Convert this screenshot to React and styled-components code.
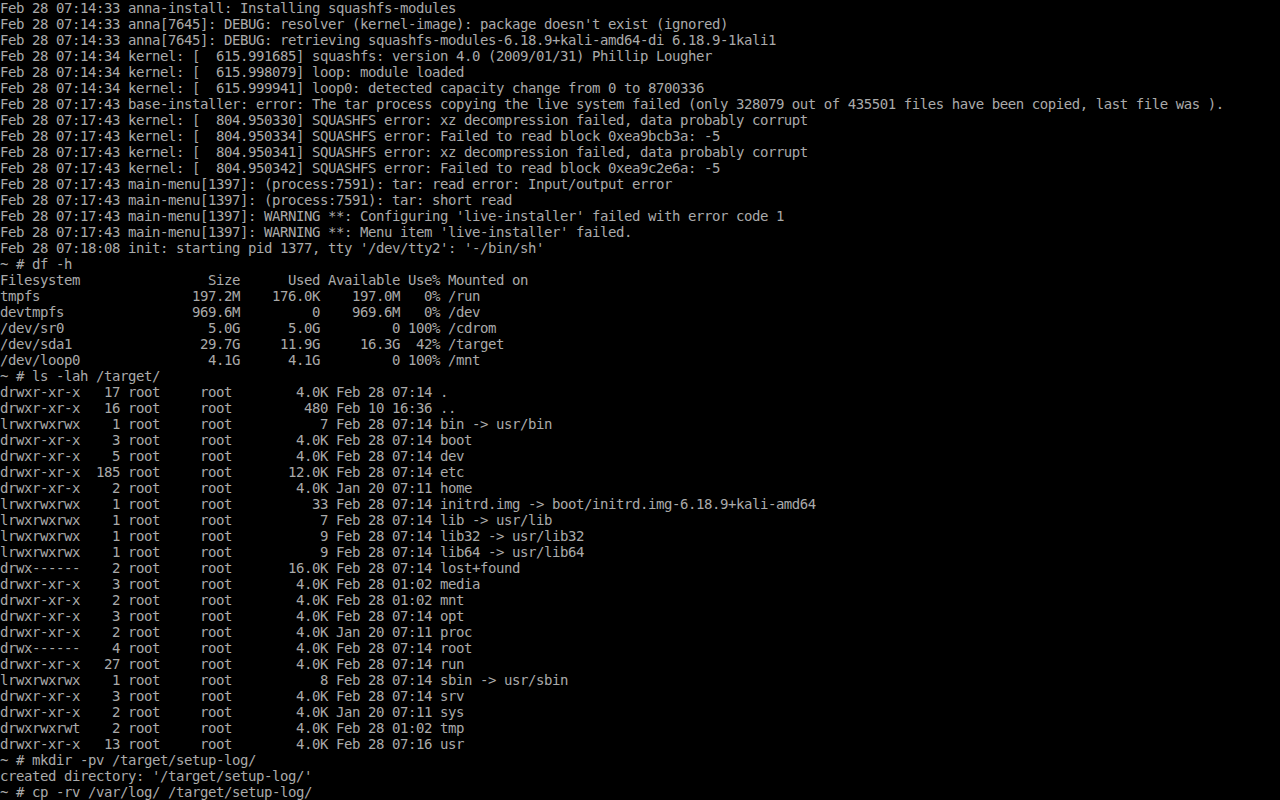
import React from "react";
import styled, { createGlobalStyle } from "styled-components";

const GlobalStyle = createGlobalStyle`
  html, body {
    margin: 0;
    padding: 0;
    background: #000;
  }
  body {
    overflow: hidden;
  }
`;

const logLines = [
  "Feb 28 07:14:33 anna-install: Installing squashfs-modules",
  "Feb 28 07:14:33 anna[7645]: DEBUG: resolver (kernel-image): package doesn't exist (ignored)",
  "Feb 28 07:14:33 anna[7645]: DEBUG: retrieving squashfs-modules-6.18.9+kali-amd64-di 6.18.9-1kali1",
  "Feb 28 07:14:34 kernel: [  615.991685] squashfs: version 4.0 (2009/01/31) Phillip Lougher",
  "Feb 28 07:14:34 kernel: [  615.998079] loop: module loaded",
  "Feb 28 07:14:34 kernel: [  615.999941] loop0: detected capacity change from 0 to 8700336",
  "Feb 28 07:17:43 base-installer: error: The tar process copying the live system failed (only 328079 out of 435501 files have been copied, last file was ).",
  "Feb 28 07:17:43 kernel: [  804.950330] SQUASHFS error: xz decompression failed, data probably corrupt",
  "Feb 28 07:17:43 kernel: [  804.950334] SQUASHFS error: Failed to read block 0xea9bcb3a: -5",
  "Feb 28 07:17:43 kernel: [  804.950341] SQUASHFS error: xz decompression failed, data probably corrupt",
  "Feb 28 07:17:43 kernel: [  804.950342] SQUASHFS error: Failed to read block 0xea9c2e6a: -5",
  "Feb 28 07:17:43 main-menu[1397]: (process:7591): tar: read error: Input/output error",
  "Feb 28 07:17:43 main-menu[1397]: (process:7591): tar: short read",
  "Feb 28 07:17:43 main-menu[1397]: WARNING **: Configuring 'live-installer' failed with error code 1",
  "Feb 28 07:17:43 main-menu[1397]: WARNING **: Menu item 'live-installer' failed.",
  "Feb 28 07:18:08 init: starting pid 1377, tty '/dev/tty2': '-/bin/sh'",
];

const mounts = [
  ["tmpfs", "197.2M", "176.0K", "197.0M", "0", "/run"],
  ["devtmpfs", "969.6M", "0", "969.6M", "0", "/dev"],
  ["/dev/sr0", "5.0G", "5.0G", "0", "100", "/cdrom"],
  ["/dev/sda1", "29.7G", "11.9G", "16.3G", "42", "/target"],
  ["/dev/loop0", "4.1G", "4.1G", "0", "100", "/mnt"],
];

const entries = [
  ["drwxr-xr-x", "17", "4.0K", "Feb 28 07:14", "."],
  ["drwxr-xr-x", "16", "480", "Feb 10 16:36", ".."],
  ["lrwxrwxrwx", "1", "7", "Feb 28 07:14", "bin -> usr/bin"],
  ["drwxr-xr-x", "3", "4.0K", "Feb 28 07:14", "boot"],
  ["drwxr-xr-x", "5", "4.0K", "Feb 28 07:14", "dev"],
  ["drwxr-xr-x", "185", "12.0K", "Feb 28 07:14", "etc"],
  ["drwxr-xr-x", "2", "4.0K", "Jan 20 07:11", "home"],
  ["lrwxrwxrwx", "1", "33", "Feb 28 07:14", "initrd.img -> boot/initrd.img-6.18.9+kali-amd64"],
  ["lrwxrwxrwx", "1", "7", "Feb 28 07:14", "lib -> usr/lib"],
  ["lrwxrwxrwx", "1", "9", "Feb 28 07:14", "lib32 -> usr/lib32"],
  ["lrwxrwxrwx", "1", "9", "Feb 28 07:14", "lib64 -> usr/lib64"],
  ["drwx------", "2", "16.0K", "Feb 28 07:14", "lost+found"],
  ["drwxr-xr-x", "3", "4.0K", "Feb 28 01:02", "media"],
  ["drwxr-xr-x", "2", "4.0K", "Feb 28 01:02", "mnt"],
  ["drwxr-xr-x", "3", "4.0K", "Feb 28 07:14", "opt"],
  ["drwxr-xr-x", "2", "4.0K", "Jan 20 07:11", "proc"],
  ["drwx------", "4", "4.0K", "Feb 28 07:14", "root"],
  ["drwxr-xr-x", "27", "4.0K", "Feb 28 07:14", "run"],
  ["lrwxrwxrwx", "1", "8", "Feb 28 07:14", "sbin -> usr/sbin"],
  ["drwxr-xr-x", "3", "4.0K", "Feb 28 07:14", "srv"],
  ["drwxr-xr-x", "2", "4.0K", "Jan 20 07:11", "sys"],
  ["drwxrwxrwt", "2", "4.0K", "Feb 28 01:02", "tmp"],
  ["drwxr-xr-x", "13", "4.0K", "Feb 28 07:16", "usr"],
];

const dfHeader =
  "Filesystem".padEnd(20) +
  " " + "Size".padStart(9) +
  " " + "Used".padStart(9) +
  " " + "Available" +
  " " + "Use%" +
  " " + "Mounted on";

const dfRow = ([fs, size, used, avail, pct, mnt]) =>
  fs.padEnd(20) +
  " " + size.padStart(9) +
  " " + used.padStart(9) +
  " " + avail.padStart(9) +
  " " + (pct + "%").padStart(4) +
  " " + mnt;

const lsRow = ([perm, links, size, date, name]) =>
  perm +
  " " + links.padStart(4) +
  " " + "root".padEnd(8) +
  " " + "root".padEnd(8) +
  " " + size.padStart(7) +
  " " + date +
  " " + name;

const lines = [
  ...logLines,
  "~ # df -h",
  dfHeader,
  ...mounts.map(dfRow),
  "~ # ls -lah /target/",
  ...entries.map(lsRow),
  "~ # mkdir -pv /target/setup-log/",
  "created directory: '/target/setup-log/'",
  "~ # cp -rv /var/log/ /target/setup-log/",
];

const Console = () => {
  return (
    <>
      <GlobalStyle />
      <Screen>
        {lines.map((line, i) => (
          <Line key={i}>{line}</Line>
        ))}
      </Screen>
    </>
  );
};

const Screen = styled.div`
  display: flex;
  flex-direction: column;
  width: 1280px;
  height: 800px;
  overflow: hidden;
  background-color: #000;
  color: #aaaaaa;
  font-family: "DejaVu Sans Mono", "Liberation Mono", monospace;
  font-size: 14px;
  letter-spacing: -0.43px;
`;

const Line = styled.div`
  height: 16px;
  line-height: 16px;
  white-space: pre;
`;

export default Console;
